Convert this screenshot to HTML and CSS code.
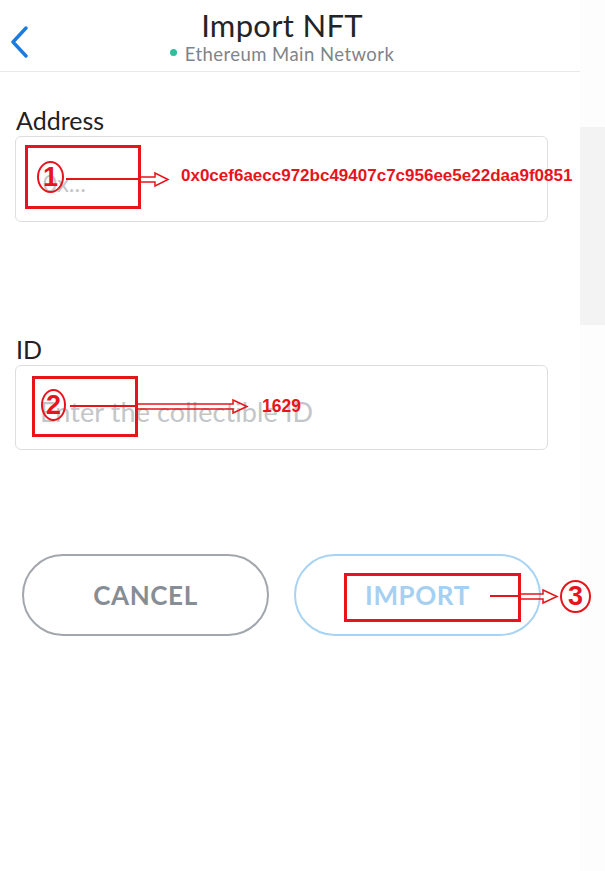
FILE: index.html
```html
<!DOCTYPE html>
<html lang="en">
<head>
<meta charset="utf-8">
<title>Import NFT</title>
<link rel="stylesheet" href="styles.css">
</head>
<body>
<div class="screen">
  <div class="main">
    <header class="topbar">
      <button class="back" aria-label="Back">
        <svg width="20" height="32" viewBox="0 0 20 32"><path d="M16 2 L3 16 L16 30" fill="none" stroke="#1a7be0" stroke-width="3.4" stroke-linecap="round" stroke-linejoin="round"/></svg>
      </button>
      <div class="title-block">
        <h1 class="title">Import NFT</h1>
        <div class="network"><span class="dot"></span>Ethereum Main Network</div>
      </div>
      <div class="spacer"></div>
    </header>
    <div class="form">
      <div class="field">
        <div class="label">Address</div>
        <div class="input"><span class="placeholder ph-address">0x...</span></div>
      </div>
      <div class="field field-id">
        <div class="label">ID</div>
        <div class="input"><span class="placeholder ph-id">Enter the collectible ID</span></div>
      </div>
      <div class="actions">
        <button class="btn btn-cancel">CANCEL</button>
        <button class="btn btn-import">IMPORT</button>
      </div>
    </div>
  </div>
  <aside class="side"><div class="side-panel"></div></aside>
</div>

<div class="annotations">
  <svg class="marks" width="605" height="871" viewBox="0 0 605 871">
    <g fill="none" stroke="#e8141c">
      <rect x="26.5" y="146.5" width="113" height="61" stroke-width="3"/>
      <rect x="33.5" y="377.5" width="103" height="58" stroke-width="3"/>
      <rect x="345.5" y="574.5" width="174" height="46" stroke-width="3"/>
      <path d="M66 179 H140" stroke-width="2"/>
      <path d="M140 177 H155 V173 L168 179.5 L155 186 V182 H140" stroke-width="1.5"/>
      <path d="M70 406 H137" stroke-width="2"/>
      <path d="M137 404 H233 V400 L247 406.5 L233 413 V409 H137" stroke-width="1.5"/>
      <path d="M490 596 H521" stroke-width="2"/>
      <path d="M521 594 H543 V590 L557 596.5 L543 603 V599 H521" stroke-width="1.5"/>
    </g>
  </svg>
  <span class="num num-1">1</span>
  <span class="num num-2">2</span>
  <span class="num num-3">3</span>
  <span class="note note-address">0x0cef6aecc972bc49407c7c956ee5e22daa9f0851</span>
  <span class="note note-id">1629</span>
</div>
</body>
</html>
```

FILE: styles.css
```css
* { box-sizing: border-box; }

html, body {
  margin: 0;
  padding: 0;
  background: #ffffff;
}

body {
  width: 605px;
  height: 871px;
  overflow: hidden;
  position: relative;
  font-family: "Lato", "Open Sans", sans-serif;
  color: #24272a;
}

.screen {
  display: flex;
  width: 605px;
  height: 871px;
}

.main {
  width: 580px;
  flex: none;
}

.side {
  flex: 1;
  background: #fdfdfd;
  padding-top: 127px;
}

.side-panel {
  height: 198px;
  background: #f3f3f4;
}

/* header */
.topbar {
  display: grid;
  grid-template-columns: 60px 1fr 76px;
  align-items: start;
  height: 72px;
  border-bottom: 1px solid #e9e9ea;
}

.back {
  margin: 26px 0 0 10px;
  padding: 0;
  border: 0;
  background: none;
  width: 20px;
  height: 32px;
}

.back svg { display: block; }

.title-block {
  display: flex;
  flex-direction: column;
  align-items: center;
  padding-top: 7px;
}

.title {
  margin: 0;
  font-size: 31px;
  font-weight: 400;
  line-height: 36px;
  color: #222426;
  letter-spacing: 0.3px;
}

.network {
  display: flex;
  align-items: center;
  gap: 8px;
  font-size: 18.5px;
  line-height: 22px;
  letter-spacing: 0.45px;
  color: #7f8489;
  margin-top: 0;
}

.dot {
  width: 7px;
  height: 7px;
  border-radius: 50%;
  background: #2fbe9c;
  margin-top: -3px;
}

/* form */
.form {
  padding: 33px 32px 0 15px;
}

.label {
  font-size: 25px;
  line-height: 30px;
  color: #1f2123;
  padding-left: 1px;
}

.input {
  margin-top: 1px;
  height: 86px;
  border: 1.5px solid #dcdee0;
  border-radius: 6px;
  display: flex;
  align-items: center;
  padding-left: 27px;
}

.placeholder {
  color: #c3c6c9;
  white-space: nowrap;
}

.ph-address {
  font-size: 24px;
  padding-top: 6px;
}

.ph-id {
  font-size: 27px;
  margin-left: -3px;
  padding-top: 8px;
  letter-spacing: 0.1px;
}

.field-id {
  margin-top: 112px;
}

.field-id .input {
  height: 85px;
}

.actions {
  display: flex;
  gap: 25px;
  padding-left: 7px;
  margin-top: 104px;
}

.btn {
  width: 247px;
  height: 82px;
  border-radius: 41px;
  background: #ffffff;
  font-family: "Lato", sans-serif;
  font-weight: 700;
  font-size: 26px;
  letter-spacing: 0.6px;
  padding: 0;
}

.btn-cancel {
  border: 2px solid #a2a7ad;
  color: #868d94;
}

.btn-import {
  border: 2px solid #a9d3f3;
  color: #a6d0f1;
}

/* annotations overlay */
.annotations {
  position: absolute;
  left: 0;
  top: 0;
  width: 605px;
  height: 871px;
  pointer-events: none;
}

.marks {
  position: absolute;
  left: 0;
  top: 0;
}

.num {
  position: absolute;
  display: flex;
  align-items: center;
  justify-content: center;
  border: 2.5px solid #e8141c;
  border-radius: 50%;
  color: #e8141c;
  font-family: "Liberation Sans", sans-serif;
  font-weight: 700;
  font-size: 27px;
  background: transparent;
}

.num-1 { left: 37px; top: 161px; width: 27px; height: 32px; }
.num-2 { left: 41px; top: 389px; width: 25px; height: 32px; }
.num-3 { left: 560px; top: 580px; width: 31px; height: 33px; }

.note {
  position: absolute;
  color: #e8141c;
  font-family: "Liberation Sans", sans-serif;
  font-weight: 700;
  font-size: 17px;
  line-height: 20px;
  white-space: nowrap;
}

.note-address { left: 181px; top: 166px; }
.note-id { left: 262px; top: 396px; font-size: 17.5px; }
```
